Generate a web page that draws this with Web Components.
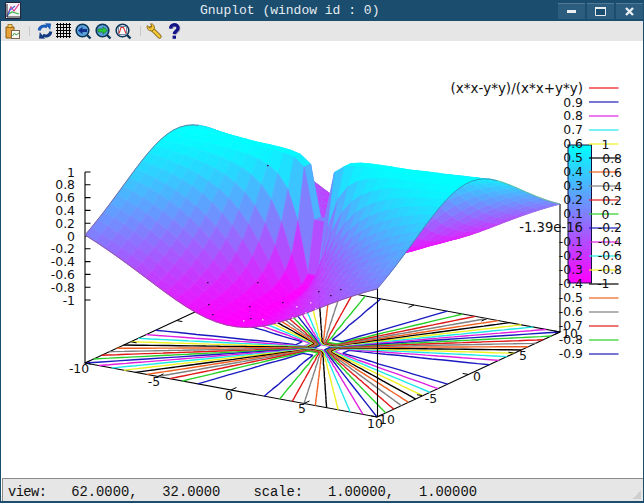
<!DOCTYPE html>
<html>
<head>
<meta charset="utf-8">
<title>Gnuplot</title>
<style>
  html, body { margin: 0; padding: 0; background: #fff; }
</style>
</head>
<body>
<gp-window>
  <gp-titlebar slot="title">Gnuplot (window id : 0)</gp-titlebar>
  <gp-toolbar slot="tools"></gp-toolbar>
  <gp-plot></gp-plot>
  <gp-statusbar slot="status"><span style="letter-spacing:-.6px">view:</span>   62.0000,   32.0000    scale:   1.00000,   1.00000</gp-statusbar>
</gp-window>

<script>
class GpWindow extends HTMLElement {
  constructor() {
    super();
    this.attachShadow({ mode: 'open' });
    this.shadowRoot.innerHTML = `
      <style>
        :host {
          display: flex;
          flex-direction: column;
          width: 644px;
          height: 503px;
          box-sizing: border-box;
          border: 1px solid #1b4d6f;
          border-top: 0;
          border-bottom-width: 2px;
          background: #fff;
          overflow: hidden;
        }
      </style>
      <slot name="title"></slot>
      <slot name="tools"></slot>
      <slot></slot>
      <slot name="status"></slot>
    `;
  }
}

class GpTitlebar extends HTMLElement {
  constructor() {
    super();
    this.attachShadow({ mode: 'open' });
    this.shadowRoot.innerHTML = `
      <style>
        :host {
          display: flex;
          align-items: center;
          height: 21px;
          margin: 0 -1px;
          padding: 0 1px 0 5px;
          background: #1b4d6f;
          color: #e4ebf0;
          font: 13px "Liberation Mono", monospace;
          flex: none;
        }
        .logo { width: 16px; height: 17px; flex: none; }
        .label { margin-left: 179px; white-space: pre; flex: 1; }
        .btns { display: flex; gap: 2px; }
        .btn {
          width: 27px;
          height: 15px;
          background: #2c5c7e;
          border-top: 1px solid #4f7a96;
          display: flex;
          align-items: center;
          justify-content: center;
        }
      </style>
      <svg class="logo" viewBox="0 0 16 17">
        <rect x=".5" y=".5" width="15" height="16" fill="#f4f4f8" stroke="#23233a"/>
        <path d="M2 14 L6 5 L9 9 L14 2" fill="none" stroke="#e03a8a" stroke-width="1.2"/>
        <path d="M2 13 L7 10 L14 12" fill="none" stroke="#3ab84a" stroke-width="1.2"/>
        <path d="M2 15 L5 8 L10 4" fill="none" stroke="#4a6ae0" stroke-width="1.2"/>
        <path d="M2 2 V15 H15" fill="none" stroke="#222" stroke-width="1"/>
      </svg>
      <span class="label"><slot></slot></span>
      <div class="btns">
        <div class="btn"><svg width="11" height="11"><rect x="1" y="4" width="9" height="3" fill="#e8eef2"/></svg></div>
        <div class="btn"><svg width="11" height="11"><path d="M.5 1.5 H10.5 V9.5 H.5 Z" fill="#1b4d6f" stroke="#e8eef2"/><rect y="1" width="11" height="2" fill="#e8eef2"/></svg></div>
        <div class="btn"><svg width="11" height="11"><path d="M2 2 L9 9 M9 2 L2 9" stroke="#e8eef2" stroke-width="2.4"/></svg></div>
      </div>
    `;
  }
}

const TOOL_ICONS = {
  open: `<path d="M2 4 H10 V15 H2 Z" fill="#e8a23a" stroke="#8a5a12"/><rect x="4" y="1.5" width="4" height="3" fill="#f6d060" stroke="#8a5a12" stroke-width=".7"/>
         <rect x="7.5" y="7.5" width="8" height="8" fill="#fbfbf4" stroke="#7a6a50"/><path d="M8.5 13 L10.5 10 L12 12 L15 10" fill="none" stroke="#3aa050"/>`,
  reload: `<path d="M2.2 7.5 A5 5 0 0 1 10.2 4" fill="none" stroke="#1a5ab8" stroke-width="3"/><path d="M8 .2 L14 .6 L13.2 7 Z" fill="#1a5ab8"/>
           <path d="M13.8 8.5 A5 5 0 0 1 5.8 12" fill="none" stroke="#123a80" stroke-width="3"/><path d="M8 15.8 L2 15.4 L2.8 9 Z" fill="#123a80"/>`,
  grid: `<path d="M0 1.5 H15 M0 4.5 H15 M0 7.5 H15 M0 10.5 H15 M0 13.5 H15 M1.5 0 V15 M4.5 0 V15 M7.5 0 V15 M10.5 0 V15 M13.5 0 V15" stroke="#000" stroke-width="1" fill="none" shape-rendering="crispEdges"/>`,
  prev: `<circle cx="7.5" cy="7.5" r="6.3" fill="#5aa0d8" stroke="#0c3658" stroke-width="1.6"/><path d="M12 12 L15.5 15.5" stroke="#0c3658" stroke-width="2.4"/><path d="M3 7.5 L7.5 3.8 V6 H12 V9 H7.5 V11.2 Z" fill="#10308c"/>`,
  next: `<circle cx="7.5" cy="7.5" r="6.3" fill="#5aa0d8" stroke="#0c3658" stroke-width="1.6"/><path d="M12 12 L15.5 15.5" stroke="#0c3658" stroke-width="2.4"/><path d="M12.4 7.5 L8 3.8 V6 H3 V9 H8 V11.2 Z" fill="#28c838" stroke="#0c5a20" stroke-width=".5"/>`,
  auto: `<circle cx="7.5" cy="7.5" r="6.3" fill="#e8f0f6" stroke="#0c3658" stroke-width="1.6"/><path d="M12 12 L15.5 15.5" stroke="#0c3658" stroke-width="2.4"/><rect x="3.5" y="3.5" width="8" height="8" fill="#fff" stroke="#406080" stroke-width=".7"/><path d="M4 10.5 L6 4.5 L8.5 4.5 L11 10.5" fill="none" stroke="#d83030" stroke-width="1.1"/>`,
  wrench: `<path d="M5 5 L13.5 13.5" stroke="#7a5a10" stroke-width="4.2" stroke-linecap="round"/><path d="M5 5 L13.5 13.5" stroke="#f2c838" stroke-width="2.6" stroke-linecap="round"/>
           <path d="M1 4 A4 4 0 0 0 7.5 7 A4 4 0 0 0 6.5 1 L4.5 .8 L6 3.5 L4 5.2 L1.3 2.6 Z" fill="#f2c838" stroke="#7a5a10" stroke-width=".8"/>`,
  help: `<path d="M2.5 5.5 C2.5 .5 10 .5 10 5 C10 8 6.3 8 6.3 11" fill="none" stroke="#8a8ab0" stroke-width="3.2" transform="translate(.8 .6)"/>
         <path d="M2.5 5.5 C2.5 .5 10 .5 10 5 C10 8 6.3 8 6.3 11" fill="none" stroke="#14148a" stroke-width="3.2"/><rect x="4.6" y="12.6" width="3.4" height="3.2" fill="#14148a"/>`
};

class GpToolbar extends HTMLElement {
  constructor() {
    super();
    this.attachShadow({ mode: 'open' });
  }

  connectedCallback() {
    const tool = (name, w, gap) => `<svg style="width:${w}px;margin-right:${gap}px" viewBox="0 0 ${w} 16">${TOOL_ICONS[name]}</svg>`;
    this.shadowRoot.innerHTML = `
      <style>
        :host {
          display: flex;
          align-items: center;
          flex: none;
          height: 20px;
          padding-left: 3px;
          background: #e6e6e6;
        }
        svg { height: 16px; flex: none; overflow: visible; }
        .sep { width: 1px; height: 10px; background: #c8c8c8; flex: none; }
      </style>
      ${tool('open', 16, 4)}
      <span class="sep" style="margin:0 7px 0 5px"></span>
      ${tool('reload', 16, 3)}
      ${tool('grid', 15, 4)}
      ${tool('prev', 16, 4)}
      ${tool('next', 16, 4)}
      ${tool('auto', 16, 4)}
      <span class="sep" style="margin:0 5px 0 5px"></span>
      ${tool('wrench', 16, 6)}
      ${tool('help', 12, 0)}
    `;
  }
}

// view 62,32 projection, fitted against the axes of the plot
const project = (x, y, z) => [
  322.5 + 14.6 * x + 9.15 * y,
  347.5 + 2.7 * x - 4.25 * y - 64 * (z + 2)
];
const pt = p => p[0].toFixed(2) + ',' + p[1].toFixed(2);
const surface = (x, y) => (x * x - y * y) / (x * x + y * y);

const KEY_COLORS = ['#f01010', '#1a1ac0', '#e020e0', '#20e8e8', '#f0f020', '#000000', '#f06020', '#808080',
  '#e01818', '#28d028', '#1a1ac0', '#e020e0', '#20e8e8', '#f0f020', '#000000', '#f06020', '#808080',
  '#e01818', '#28d028', '#1a1ac0'];
const KEY_LABELS = ['0.9', '0.8', '0.7', '0.6', '0.5', '0.4', '0.3', '0.2', '0.1', '-1.39e-16',
  '-0.1', '-0.2', '-0.3', '-0.4', '-0.5', '-0.6', '-0.7', '-0.8', '-0.9'];
const SAMPLES = 30;

class GpPlot extends HTMLElement {
  constructor() {
    super();
    this.attachShadow({ mode: 'open' });
  }

  connectedCallback() {
    this.render();
  }

  grid(i) {
    return -10 + 20 * i / (SAMPLES - 1);
  }

  contours() {
    let out = '';
    KEY_LABELS.forEach((label, k) => {
      const level = (label === '-1.39e-16' ? 0 : parseFloat(label)) + 1e-7;
      let d = '';
      for (let i = 0; i < SAMPLES - 1; i++) {
        for (let j = 0; j < SAMPLES - 1; j++) {
          const c = [[i, j], [i + 1, j], [i + 1, j + 1], [i, j + 1]].map(q => {
            const x = this.grid(q[0]), y = this.grid(q[1]);
            return { x, y, z: surface(x, y) };
          });
          const hits = [];
          for (let e = 0; e < 4; e++) {
            const a = c[e], b = c[(e + 1) % 4];
            if ((a.z - level) * (b.z - level) < 0) {
              const t = (level - a.z) / (b.z - a.z);
              hits.push(project(a.x + t * (b.x - a.x), a.y + t * (b.y - a.y), -2));
            }
          }
          for (let h = 0; h + 1 < hits.length; h += 2) {
            d += 'M' + pt(hits[h]) + 'L' + pt(hits[h + 1]);
          }
        }
      }
      out += `<path d="${d}" stroke="${KEY_COLORS[k + 1]}" fill="none" stroke-width="1.4"/>`;
    });
    return out;
  }

  quads() {
    const cells = [];
    for (let i = 0; i < SAMPLES - 1; i++) {
      for (let j = 0; j < SAMPLES - 1; j++) {
        const c = [[i, j], [i + 1, j], [i + 1, j + 1], [i, j + 1]].map(q => {
          const x = this.grid(q[0]), y = this.grid(q[1]);
          return [x, y, surface(x, y)];
        });
        const z = c.reduce((s, p) => s + p[2], 0) / 4;
        const t = (1 - z) / 2;
        const fill = `rgb(${Math.round(255 * t)},${Math.round(255 * (1 - t))},255)`;
        const depth = 2.7 * this.grid(i + .5) - 4.25 * this.grid(j + .5);
        cells.push({ depth, fill, points: c.map(p => pt(project(p[0], p[1], p[2]))).join(' ') });
      }
    }
    cells.sort((a, b) => a.depth - b.depth);
    return cells.map(q => `<polygon points="${q.points}" fill="${q.fill}" stroke="${q.fill}" stroke-width=".7"/>`).join('');
  }

  edge(fn, from, to) {
    const p = [];
    for (let i = from; i <= to; i++) {
      const a = this.grid(i);
      const xy = fn(a);
      p.push(pt(project(xy[0], xy[1], surface(xy[0], xy[1]))));
    }
    return p.join(' ');
  }

  render() {
    // base plane frame and its ticks
    const corners = [[-10, -10], [10, -10], [10, 10], [-10, 10]].map(c => project(c[0], c[1], -2));
    let ticks = '';
    [-10, -5, 0, 5, 10].forEach(v => {
      const seg = (a, b, c, d) => `M${pt(project(a, b, -2))}L${pt(project(c, d, -2))}`;
      ticks += seg(v, -10, v, -9.4) + seg(v, 10, v, 9.4) + seg(-10, v, -9.6, v) + seg(10, v, 9.6, v);
    });

    // z axis ticks and labels
    let zTicks = '';
    let zLabels = '';
    for (let i = 0; i <= 10; i++) {
      const value = 1 - i * .2;
      const y = 172 + i * 12.8;
      const label = i === 5 ? '0' : (Number.isInteger(Math.round(value * 10) / 10) ? String(Math.round(value)) : value.toFixed(1));
      zTicks += `M85 ${y}H90.5`;
      zLabels += `<text x="75" y="${y + 4.5}" text-anchor="end">${label}</text>`;
    }

    const axisLabels = [
      ['-10', 79, 373], ['-5', 154, 386], ['0', 229, 400], ['5', 302, 413], ['10', 375, 428],
      ['10', 387, 424], ['-5', 431, 403], ['0', 477, 381], ['5', 523, 360], ['10', 570, 338]
    ].map(l => `<text x="${l[1]}" y="${l[2]}" text-anchor="middle">${l[0]}</text>`).join('');

    // legend
    const keyLines = KEY_COLORS.map((c, i) => `<path d="M589 ${88 + i * 14}H618.5" stroke="${c}" stroke-width="1.2"/>`).join('');
    const keyTexts = KEY_LABELS.map((l, i) => {
      const size = l.length > 4 ? ' style="font-size:13.2px"' : '';
      return `<text x="583" y="${102 + i * 13.95 + 4.5}" text-anchor="end"${size}>${l}</text>`;
    }).join('');

    // colour box labels, decimal points line up
    const boxLabels = ['1', '0.8', '0.6', '0.4', '0.2', '0', '-0.2', '-0.4', '-0.6', '-0.8', '-1'].map((l, i) => {
      const whole = l.length < 3;
      return `<text x="${whole ? 609.5 : 622}" y="${144.5 + i * 13.9 + 4.5}" text-anchor="end">${l}</text>`;
    }).join('');

    const specks = [[267, 165], [207, 282], [257, 282], [249, 306], [208, 304], [212, 314], [318, 291], [340, 289], [330, 295], [282, 302], [250, 318]]
      .map(s => `<rect x="${s[0]}" y="${s[1]}" width="1.6" height="1.2" fill="#301048"/>`).join('');
    const glints = [[243, 320], [262, 319], [276, 322], [292, 317], [305, 312], [310, 302], [315, 308], [296, 306]]
      .map(s => `<rect x="${s[0]}" y="${s[1]}" width="1.5" height="1.5" fill="#f6b8f6"/>`).join('');

    this.shadowRoot.innerHTML = `
      <style>
        :host { display: block; flex: 1; min-height: 0; background: #fff; }
        svg { display: block; width: 642px; height: 437px; }
        text { font: 12.4px "DejaVu Sans", sans-serif; fill: #111; }
        .title { font-size: 13.5px; }
      </style>
      <svg viewBox="1 41 642 437">
        <defs>
          <linearGradient id="cbox" x1="0" y1="0" x2="0" y2="1">
            <stop offset="0" stop-color="#00ffff"/>
            <stop offset="1" stop-color="#ff00ff"/>
          </linearGradient>
        </defs>
        <polygon points="${corners.map(pt).join(' ')}" fill="none" stroke="#000" stroke-width="1.1"/>
        ${this.contours()}
        <path d="${ticks}" stroke="#000" fill="none"/>
        <path d="M85 172V363 ${zTicks}" stroke="#000" fill="none" stroke-width="1.1"/>
        <path d="M377.5 288V417 M560 204V332" stroke="#000" fill="none" stroke-width="1.1"/>
        <polyline points="${this.edge(a => [a, 10], 0, 29)}" fill="none" stroke="#9a4a8a" stroke-width=".8"/>
        <polyline points="${this.edge(a => [-10, a], 18, 29)}" fill="none" stroke="#7a4a7a" stroke-width=".7"/>
        ${this.quads()}
        <polyline points="${this.edge(a => [-10, a], 0, 18)}" fill="none" stroke="#7a4a7a" stroke-width=".7"/>
        <polyline points="${this.edge(a => [a, -10], 0, 29)}" fill="none" stroke="#8a4a8a" stroke-width=".8"/>
        <polyline points="${this.edge(a => [10, a], 0, 19)}" fill="none" stroke="#4a5a8a" stroke-width=".6"/>
        <polyline points="${this.edge(a => [10, a], 19, 29)}" fill="none" stroke="#60c080" stroke-width=".8"/>
        ${specks}${glints}
        ${zLabels}
        ${axisLabels}
        <rect x="568" y="145" width="23.5" height="138" fill="url(#cbox)" stroke="#101040" stroke-width="1"/>
        ${keyLines}
        <text class="title" x="583" y="92.5" text-anchor="end">(x*x-y*y)/(x*x+y*y)</text>
        ${keyTexts}
        ${boxLabels}
      </svg>
    `;
  }
}

class GpStatusbar extends HTMLElement {
  constructor() {
    super();
    this.attachShadow({ mode: 'open' });
    this.shadowRoot.innerHTML = `
      <style>
        :host {
          display: flex;
          align-items: center;
          flex: none;
          height: 23px;
          box-sizing: border-box;
          padding: 4px 0 0 5px;
          background: #e6e6e6;
          border-top: 1px solid #8a8a8a;
          border-left: 1px solid #8a8a8a;
          margin-left: 1px;
          font: 13.8px "Liberation Mono", monospace;
          color: #111;
          white-space: pre;
          position: relative;
        }
        .grip {
          position: absolute;
          right: 2px;
          bottom: 2px;
          width: 9px;
          height: 9px;
          background: linear-gradient(135deg, transparent 50%, #cfcfcf 50%);
        }
      </style>
      <span><slot></slot></span>
      <div class="grip"></div>
    `;
  }
}

customElements.define('gp-window', GpWindow);
customElements.define('gp-titlebar', GpTitlebar);
customElements.define('gp-toolbar', GpToolbar);
customElements.define('gp-plot', GpPlot);
customElements.define('gp-statusbar', GpStatusbar);
</script>
</body>
</html>
